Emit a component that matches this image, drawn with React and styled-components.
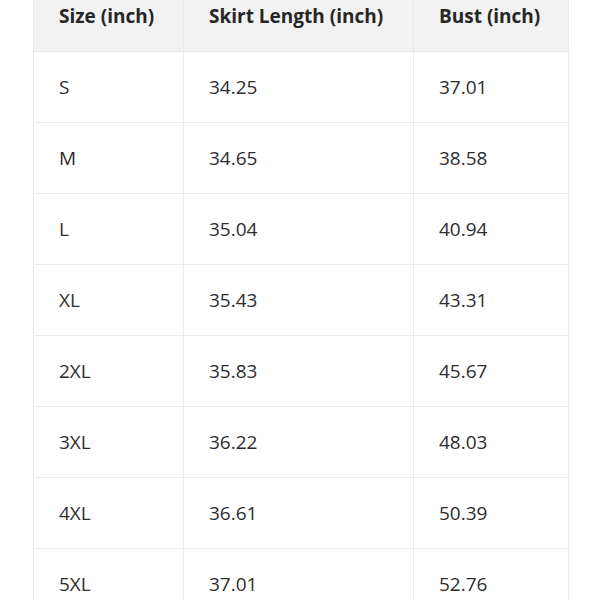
import React from "react";
import styled, { createGlobalStyle } from "styled-components";

const rows = [
  ["S", "34.25", "37.01"],
  ["M", "34.65", "38.58"],
  ["L", "35.04", "40.94"],
  ["XL", "35.43", "43.31"],
  ["2XL", "35.83", "45.67"],
  ["3XL", "36.22", "48.03"],
  ["4XL", "36.61", "50.39"],
  ["5XL", "37.01", "52.76"],
];

const Global = createGlobalStyle`
  html, body {
    margin: 0;
    background: #ffffff;
    overflow: hidden;
  }
`;

const Page = styled.div`
  width: 600px;
  height: 600px;
  overflow: hidden;
  padding-left: 33px;
  box-sizing: border-box;
`;

const Table = styled.table`
  margin-top: -20px;
  border-collapse: collapse;
  font-family: "Open Sans", "Noto Sans", sans-serif;
  font-size: 19px;
  color: #2d2d2d;
  table-layout: fixed;
  width: 535px;
`;

const Th = styled.th`
  box-sizing: border-box;
  background: #f2f2f2;
  font-weight: 700;
  text-align: left;
  padding: 24px 25px;
  line-height: 22px;
  border: 1px solid #e8e8e8;
  width: ${(p) => p.w}px;
  white-space: nowrap;
  color: #262626;
`;

const Td = styled.td`
  text-align: left;
  padding: 24px 25px;
  line-height: 22px;
  border: 1px solid #ebebeb;
  font-weight: 400;
`;

export default function App() {
  return (
    <Page>
      <Global />
      <Table>
        <thead>
          <tr>
            <Th w={150}>Size (inch)</Th>
            <Th w={230}>Skirt Length (inch)</Th>
            <Th w={155}>Bust (inch)</Th>
          </tr>
        </thead>
        <tbody>
          {rows.map((r) => (
            <tr key={r[0]}>
              <Td>{r[0]}</Td>
              <Td>{r[1]}</Td>
              <Td>{r[2]}</Td>
            </tr>
          ))}
        </tbody>
      </Table>
    </Page>
  );
}
